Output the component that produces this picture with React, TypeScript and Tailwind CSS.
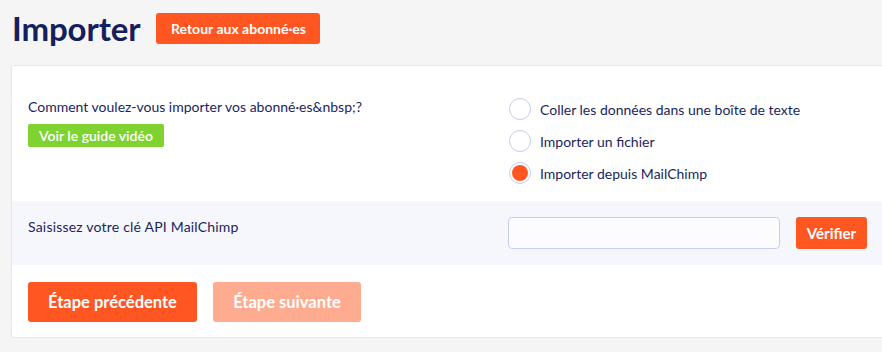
export default function App() {
  const options = [
    { label: "Coller les données dans une boîte de texte", checked: false },
    { label: "Importer un fichier", checked: false },
    { label: "Importer depuis MailChimp", checked: true },
  ]

  return (
    <div className="h-[352px] w-[882px] overflow-hidden bg-[#f5f5f6] font-['Lato',sans-serif] text-[#1b1f5e]">
      {/* Header */}
      <div className="flex items-center gap-4 pl-3 pt-[13px]">
        <h1 className="text-[33px] font-bold leading-[31px] tracking-[-0.1px] text-[#14205e]">Importer</h1>
        <button className="h-[31px] w-[164px] rounded-[3px] bg-[#ff5622] text-[14px] font-bold text-white">
          Retour aux abonné·es
        </button>
      </div>

      {/* Card */}
      <div className="ml-[11px] mt-[21px] w-[900px] overflow-hidden rounded-[3px] border border-[#e3e6f3] bg-white">
        <div className="flex h-[135px] pt-[31px]">
          <div className="w-[497px] pl-[16px]">
            <p className="text-[14px] leading-5">Comment voulez-vous importer vos abonné·es&amp;nbsp;?</p>
            <button className="mt-[7px] h-[23px] rounded-[2px] bg-[#7ed330] px-[11px] text-[14px] font-semibold text-white">
              Voir le guide vidéo
            </button>
          </div>
          <div className="flex flex-col gap-[10px] pt-px">
            {options.map((o) => (
              <label key={o.label} className="flex h-[22px] items-center gap-[9px] text-[14px]">
                <span className="flex h-[22px] w-[22px] items-center justify-center rounded-full border border-[#c3ccef] bg-white">
                  {o.checked && <span className="h-[16px] w-[16px] rounded-full bg-[#ff5622]" />}
                </span>
                {o.label}
              </label>
            ))}
          </div>
        </div>

        <div className="flex h-[64px] bg-[#f6f7fc] pt-[16px]">
          <div className="w-[496px] pl-[16px] pt-[2px] text-[14px] leading-4 tracking-[0.2px]">Saisissez votre clé API MailChimp</div>
          <input className="h-[32px] w-[272px] rounded-[4px] border border-[#c5cdf0] bg-[#fcfcfe] outline-none" />
          <button className="ml-4 h-[32px] w-[71px] rounded-[3px] bg-[#ff5622] text-[15px] font-bold text-white">
            Vérifier
          </button>
        </div>

        <div className="flex h-[72px] gap-4 pl-[16px] pt-[17px]">
          <button className="h-[40px] w-[169px] rounded-[3px] bg-[#ff5622] text-[16.5px] font-bold text-white">
            Étape précédente
          </button>
          <button className="h-[40px] w-[148px] rounded-[3px] bg-[#ffab90] text-[16.5px] font-bold text-white">
            Étape suivante
          </button>
        </div>
      </div>
    </div>
  )
}
